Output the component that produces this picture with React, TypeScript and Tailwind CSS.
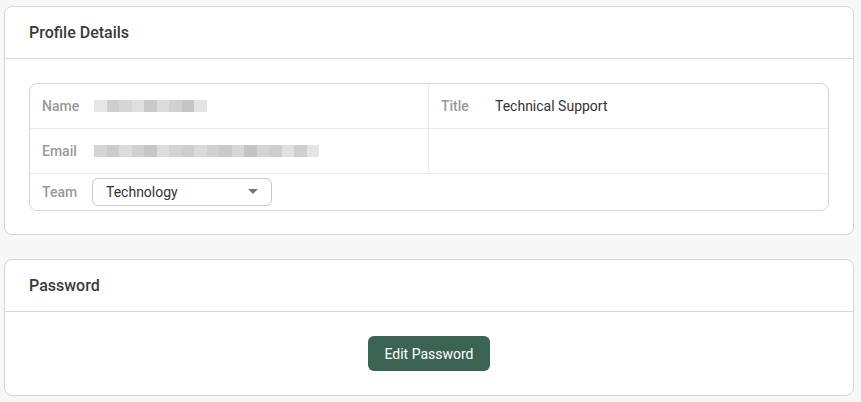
const nameBlocks = ["#e4e4e4", "#c9c9c9", "#d2d2d2", "#dcdcdc", "#c4c4c4", "#d8d8d8", "#cdcdcd", "#bfbfbf", "#e0e0e0"];
const emailBlocks = [
  "#d0d0d0", "#c6c6c6", "#d9d9d9", "#cbcbcb", "#c2c2c2", "#dadada", "#cfcfcf", "#c8c8c8",
  "#d6d6d6", "#cccccc", "#c4c4c4", "#d3d3d3", "#bdbdbd", "#d0d0d0", "#c9c9c9", "#dedede",
  "#cacaca", "#e2e2e2",
];

function Blurred({ blocks }: { blocks: string[] }) {
  return (
    <div className="flex h-[12px] opacity-90">
      {blocks.map((c, i) => (
        <div key={i} className="w-[12.5px] h-full" style={{ backgroundColor: c }} />
      ))}
    </div>
  );
}

function Card({ title, bodyClass, children }: { title: string; bodyClass: string; children: React.ReactNode }) {
  return (
    <section className="bg-white border border-[#d6d6d6] rounded-[8px]">
      <div className="h-[52px] flex items-center px-6 border-b border-[#d6d6d6]">
        <h2 className="text-[16px] font-medium text-[#3a3a3a]">{title}</h2>
      </div>
      <div className={bodyClass}>{children}</div>
    </section>
  );
}

export default function App() {
  return (
    <div
      className="min-h-[402px] bg-[#f7f7f7] pt-[6px] pl-[4px] pr-[7px]"
      style={{ fontFamily: "Roboto, 'Liberation Sans', sans-serif" }}
    >
      <div className="flex flex-col gap-6">
        <Card title="Profile Details" bodyClass="px-6 pt-6 pb-[23px]">
          <div className="border border-[#d6d6d6] rounded-[8px] text-sm">
            <div className="grid grid-cols-2 border-b border-[#ebebeb]">
              <div className="h-[44px] flex items-center pl-3 border-r border-[#ebebeb]">
                <span className="w-[52px] font-medium text-[#999]">Name</span>
                <Blurred blocks={nameBlocks} />
              </div>
              <div className="h-[44px] flex items-center pl-3">
                <span className="w-[54px] font-medium text-[#999]">Title</span>
                <span className="text-[#333]">Technical Support</span>
              </div>
            </div>
            <div className="grid grid-cols-2 border-b border-[#ebebeb]">
              <div className="h-[44px] flex items-center pl-3 border-r border-[#ebebeb]">
                <span className="w-[52px] font-medium text-[#999]">Email</span>
                <Blurred blocks={emailBlocks} />
              </div>
              <div className="h-[44px]" />
            </div>
            <div className="h-[36px] flex items-center pl-3">
              <span className="w-[50px] font-medium text-[#999]">Team</span>
              <div className="w-[180px] h-[28px] border border-[#c8c8c8] rounded-[6px] flex items-center justify-between pl-[13px] pr-[13px]">
                <span className="text-[#333]">Technology</span>
                <svg width="10" height="6" viewBox="0 0 10 6">
                  <path d="M0 0 L10 0 L5 5 Z" fill="#777" />
                </svg>
              </div>
            </div>
          </div>
        </Card>
        <Card title="Password" bodyClass="p-6">
          <div className="flex justify-center">
            <button className="h-[35px] w-[122px] rounded-[6px] bg-[#3b6354] text-white text-sm">
              Edit Password
            </button>
          </div>
        </Card>
      </div>
    </div>
  );
}
